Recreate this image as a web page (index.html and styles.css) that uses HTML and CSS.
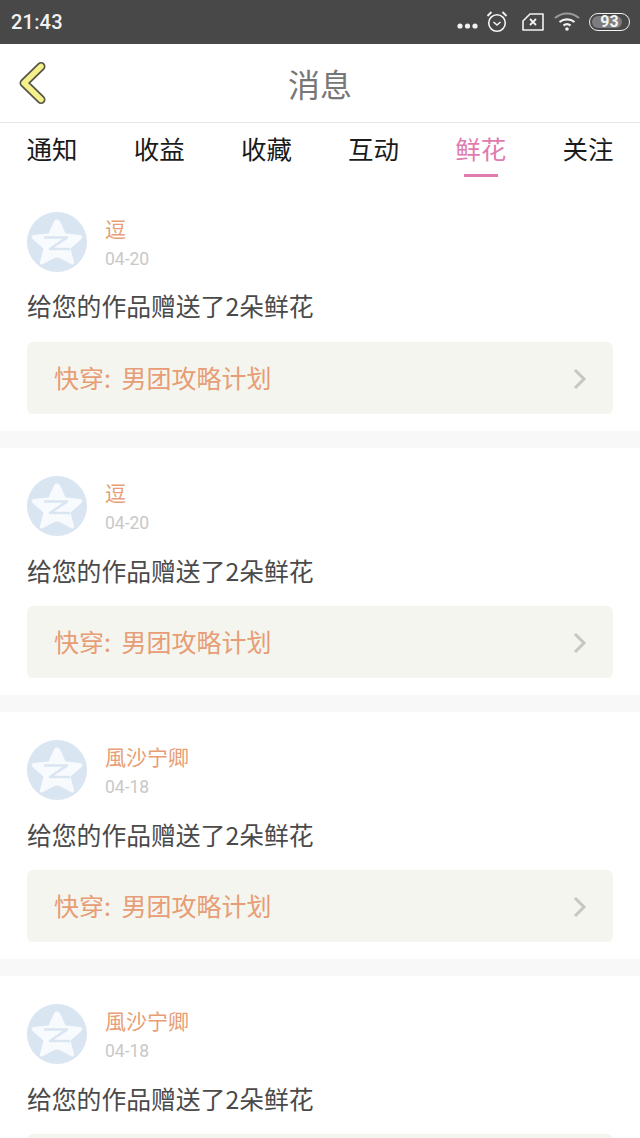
FILE: index.html
```html
<!DOCTYPE html>
<html lang="zh-CN">
<head>
<meta charset="utf-8">
<title>消息</title>
<link rel="stylesheet" href="styles.css">
</head>
<body>
<svg class="defs" width="0" height="0" aria-hidden="true">
  <defs>
    <symbol id="avatar" viewBox="0 0 60 60">
      <circle cx="30" cy="30" r="30" fill="#dae5f2"/>
      <path d="M30 7.500 C32 7.500 33 9 34 11.500 L38.500 21.500 L53 23 C55.500 23.400 56 25 54.500 26.800 C51 30.500 47 33.500 43.500 36.500 L47 50 C47.500 52.500 46 53 44 52 C39 49.500 34 46 30 45.500 C26 46 21 49.500 16 52 C14 53 12.500 52.500 13 50 L16.500 36.500 C13 33.500 9 30.500 5.500 26.800 C4 25 4.500 23.400 7 23 L21.500 21.500 L26 11.500 C27 9 28 7.500 30 7.500 Z" fill="#f8fbfd"/>
      <path d="M17 25.500 H40 L23 37 H43" fill="none" stroke="#dae5f2" stroke-width="2.600" stroke-linejoin="round"/>
    </symbol>
  </defs>
</svg>
<header class="status">
  <span class="clock">21:43</span>
  <div class="status-icons">
    <svg class="ic-dots" width="22" height="6" viewBox="0 0 22 6"><circle cx="3" cy="3" r="2.600" fill="#f2f2f2"/><circle cx="10.500" cy="3" r="2.600" fill="#f2f2f2"/><circle cx="18" cy="3" r="2.600" fill="#f2f2f2"/></svg>
    <svg class="ic-alarm" width="22" height="23" viewBox="0 0 22 23" fill="none" stroke="#f2f2f2"><circle cx="11" cy="13" r="8.300" stroke-width="1.600"/><path d="M7.500 12l3.500 3 3.500-3" stroke-width="1.600"/><path d="M1.500 6l4-4M20.500 6l-4-4" stroke-width="1.800"/></svg>
    <svg class="ic-sim" width="22" height="18" viewBox="0 0 22 18" fill="none" stroke="#f2f2f2" stroke-width="1.600"><path d="M8 1H21V17H1V8Z" stroke-linejoin="round"/><path d="M8 6l6 6M14 6l-6 6" stroke-width="1.800"/></svg>
    <svg class="ic-wifi" width="26" height="20" viewBox="0 0 26 20" fill="none" stroke="#f2f2f2" stroke-width="2.200"><path d="M1 7C8 1 18 1 25 7" stroke="#9a9a9a"/><path d="M5.500 11C10 7.500 16 7.500 20.500 11"/><path d="M9.500 14.500C11.500 13 14.500 13 16.500 14.500"/><circle cx="13" cy="18" r="1.800" fill="#f2f2f2" stroke="none"/></svg>
    <div class="battery"><div class="battery-fill"></div><span class="battery-num">93</span></div>
  </div>
</header>
<nav class="titlebar">
  <svg class="back" width="30" height="44" viewBox="0 0 30 44"><path d="M23 5.500 L6 22 L23 38.500" fill="none" stroke="#555548" stroke-width="9" stroke-linecap="round" stroke-linejoin="round"/><path d="M23 5.500 L6 22 L23 38.500" fill="none" stroke="#f5f08c" stroke-width="5.500" stroke-linecap="round" stroke-linejoin="round"/></svg>
  <h1 class="title">消息</h1>
</nav>
<div class="tabs">
  <span class="tab">通知</span>
  <span class="tab">收益</span>
  <span class="tab">收藏</span>
  <span class="tab">互动</span>
  <span class="tab active">鲜花</span>
  <span class="tab">关注</span>
</div>
<main class="list">
  <article class="item">
    <div class="user">
      <svg class="avatar"><use href="#avatar"/></svg>
      <div class="meta"><div class="name">逗</div><div class="date">04-20</div></div>
    </div>
    <p class="msg">给您的作品赠送了2朵鲜花</p>
    <div class="book"><span class="book-title">快穿: 男团攻略计划</span><svg class="chev" width="14" height="22" viewBox="0 0 14 22"><path d="M2 2l9 9-9 9" fill="none" stroke="#c6c6c2" stroke-width="3"/></svg></div>
  </article>
  <article class="item">
    <div class="user">
      <svg class="avatar"><use href="#avatar"/></svg>
      <div class="meta"><div class="name">逗</div><div class="date">04-20</div></div>
    </div>
    <p class="msg">给您的作品赠送了2朵鲜花</p>
    <div class="book"><span class="book-title">快穿: 男团攻略计划</span><svg class="chev" width="14" height="22" viewBox="0 0 14 22"><path d="M2 2l9 9-9 9" fill="none" stroke="#c6c6c2" stroke-width="3"/></svg></div>
  </article>
  <article class="item">
    <div class="user">
      <svg class="avatar"><use href="#avatar"/></svg>
      <div class="meta"><div class="name">風沙宁卿</div><div class="date">04-18</div></div>
    </div>
    <p class="msg">给您的作品赠送了2朵鲜花</p>
    <div class="book"><span class="book-title">快穿: 男团攻略计划</span><svg class="chev" width="14" height="22" viewBox="0 0 14 22"><path d="M2 2l9 9-9 9" fill="none" stroke="#c6c6c2" stroke-width="3"/></svg></div>
  </article>
  <article class="item">
    <div class="user">
      <svg class="avatar"><use href="#avatar"/></svg>
      <div class="meta"><div class="name">風沙宁卿</div><div class="date">04-18</div></div>
    </div>
    <p class="msg">给您的作品赠送了2朵鲜花</p>
    <div class="book"></div>
  </article>
</main>
</body>
</html>
```
FILE: styles.css
```css
* { box-sizing: border-box; margin: 0; padding: 0; }
html, body { height: 1138px; overflow: hidden; }
body { background: #fff; font-family: "Noto Sans CJK SC", "Noto Sans", sans-serif; color: #222; }
.defs { position: absolute; }
.status { height: 44px; background: #484848; display: flex; align-items: center; justify-content: space-between; padding: 0 10px 0 11px; }
.clock { font-family: Roboto, sans-serif; font-weight: 500; font-size: 20px; color: #f2f2f2; letter-spacing: 0.2px; }
.status-icons { display: flex; align-items: center; }
.ic-dots { margin-top: 8px; margin-right: 7px; }
.ic-alarm { margin-right: 14px; margin-top: -1px; }
.ic-sim { margin-right: 10px; }
.ic-wifi { margin-right: 9px; margin-top: -2px; }
.battery { position: relative; width: 41px; height: 18px; border: 1.500px solid #f2f2f2; border-radius: 9px; overflow: hidden; display: flex; align-items: center; justify-content: center; }
.battery-fill { position: absolute; left: 2px; top: 2px; bottom: 2px; width: 30px; background: #7d7d7d; border-radius: 6px; }
.battery-num { position: relative; font-family: Roboto, sans-serif; font-weight: 700; font-size: 16px; line-height: 16px; color: #f2f2f2; }
.titlebar { height: 79px; border-bottom: 1px solid #e6e6e6; display: flex; align-items: center; justify-content: center; position: relative; }
.back { position: absolute; left: 18px; top: 17px; }
.title { font-size: 32px; font-weight: 400; color: #777; line-height: 1; }
.tabs { height: 68px; display: flex; justify-content: space-between; padding: 0 26.500px; }
.tab { font-size: 25.500px; line-height: 30px; padding-top: 10px; color: #1a1a1a; position: relative; height: 54px; }
.tab.active { color: #e07bb0; }
.tab.active::after { content: ""; position: absolute; left: 9px; right: 8px; bottom: 0; height: 3px; background: #e07bb0; }
.list { background: #f9f8f8; height: 947px; overflow: hidden; }
.item { background: #fff; height: 247px; margin-bottom: 17px; padding: 28px 27px 0; }
.item:first-child { height: 240px; padding-top: 21px; }
.item .msg { margin-top: 16px; }
.item .book { margin-top: 18px; }
.item:first-child .msg { margin-top: 15px; }
.item:first-child .book { margin-top: 19px; }
.user { display: flex; height: 60px; }
.avatar { width: 60px; height: 60px; flex: none; }
.meta { margin-left: 18px; }
.name { font-size: 21px; line-height: 30px; color: #e79d75; margin-top: 1px; }
.date { font-family: Roboto, sans-serif; font-size: 17.500px; line-height: 24px; color: #c8c8c8; margin-top: 4px; }
.msg { font-size: 24.800px; line-height: 36px; color: #4a4a4a; }
.book { height: 72px; background: #f5f5f0; border-radius: 6px; display: flex; align-items: center; justify-content: space-between; padding: 0 26px 0 27px; }
.book-title { font-size: 25px; color: #e79d75; line-height: 32px; word-spacing: 5px; margin-top: -2px; }
.chev { margin-top: 1px; }
```
